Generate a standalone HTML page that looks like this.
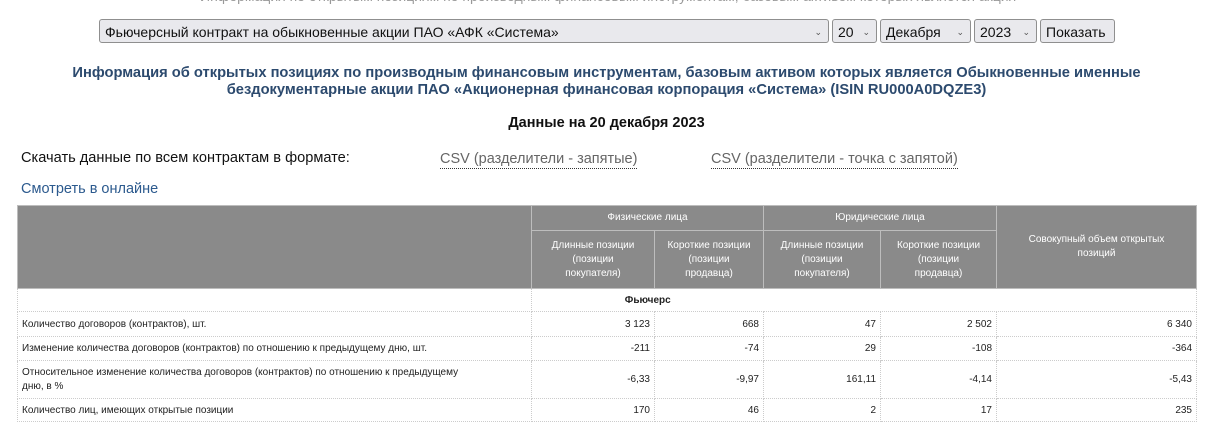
<!DOCTYPE html>
<html><head><meta charset="utf-8"><style>
body{margin:0;width:1213px;height:436px;background:#fff;font-family:"Liberation Sans",sans-serif;position:relative;overflow:hidden;color:#222}
.a{position:absolute;white-space:nowrap}
.sel{position:absolute;top:19px;height:24px;border:1px solid #8f8f8f;border-radius:3px;background:#e9e9ed;font-size:14px;line-height:24px;padding-left:5px;box-sizing:border-box;color:#111}
.sel .c{position:absolute;right:6px;top:0;font-size:9px;color:#555}
.t{position:absolute;color:#2c4a6e;font-weight:bold;font-size:14.7px;text-align:center;left:0;width:1213px;line-height:17px}
.csv{color:#666;font-size:14.5px;border-bottom:1px dotted #333;line-height:17px}
table{position:absolute;left:17px;top:205px;border-collapse:collapse;font-size:10px;width:1180px}
th{background:#8a8a8a;color:#fff;font-weight:normal;border:1px solid #bdbdbd;padding:0 3px;line-height:14px}
td{border:1px dotted #ccc;padding:0 4px;text-align:right}
td.l{text-align:left}
</style></head><body>
<div class="a" style="top:-12px;left:200px;font-size:14px;color:#999">Информация по открытым позициям по производным финансовым инструментам, базовым активом которых является акция</div>
<div class="sel" style="left:99px;width:730px">Фьючерсный контракт на обыкновенные акции ПАО «АФК «Система»<span class="c">&#8964;</span></div>
<div class="sel" style="left:832px;width:45px">20<span class="c">&#8964;</span></div>
<div class="sel" style="left:880px;width:91px">Декабря<span class="c">&#8964;</span></div>
<div class="sel" style="left:974px;width:63px">2023<span class="c">&#8964;</span></div>
<div class="sel" style="left:1040px;width:75px">Показать</div>
<div class="t" style="top:65px">Информация об открытых позициях по производным финансовым инструментам, базовым активом которых является Обыкновенные именные<br>бездокументарные акции ПАО «Акционерная финансовая корпорация «Система» (ISIN RU000A0DQZE3)</div>
<div class="a" style="top:115px;left:0;width:1213px;text-align:center;font-weight:bold;font-size:14.5px;color:#111">Данные на 20 декабря 2023</div>
<div class="a" style="top:150px;left:21px;font-size:14.6px;color:#111">Скачать данные по всем контрактам в формате:</div>
<div class="a csv" style="top:151px;left:440px">CSV (разделители - запятые)</div>
<div class="a csv" style="top:151px;left:711px">CSV (разделители - точка с запятой)</div>
<div class="a" style="top:181px;left:21px;font-size:14.5px;color:#2c5a8e">Смотреть в онлайне</div>
<table>
<tr style="height:25px"><th rowspan="2" style="width:507px"></th><th colspan="2">Физические лица</th><th colspan="2">Юридические лица</th><th rowspan="2" style="width:193px">Совокупный объем открытых<br>позиций</th></tr>
<tr style="height:58px"><th style="width:116px">Длинные позиции<br>(позиции<br>покупателя)</th><th style="width:102px">Короткие позиции<br>(позиции<br>продавца)</th><th style="width:110px">Длинные позиции<br>(позиции<br>покупателя)</th><th style="width:109px">Короткие позиции<br>(позиции<br>продавца)</th></tr>
<tr style="height:23px"><td></td><td colspan="2" style="text-align:center;font-weight:bold;border-bottom:1px dotted #ccc;border-left:none;border-right:none">Фьючерс</td><td colspan="3" style="border-left:none"></td></tr>
<tr style="height:25px"><td class="l">Количество договоров (контрактов), шт.</td><td>3 123</td><td>668</td><td>47</td><td>2 502</td><td>6 340</td></tr>
<tr style="height:24px"><td class="l">Изменение количества договоров (контрактов) по отношению к предыдущему дню, шт.</td><td>-211</td><td>-74</td><td>29</td><td>-108</td><td>-364</td></tr>
<tr style="height:38px"><td class="l" style="line-height:14px">Относительное изменение количества договоров (контрактов) по отношению к предыдущему<br>дню, в %</td><td>-6,33</td><td>-9,97</td><td>161,11</td><td>-4,14</td><td>-5,43</td></tr>
<tr style="height:23px"><td class="l">Количество лиц, имеющих открытые позиции</td><td>170</td><td>46</td><td>2</td><td>17</td><td>235</td></tr>
</table>
</body></html>
